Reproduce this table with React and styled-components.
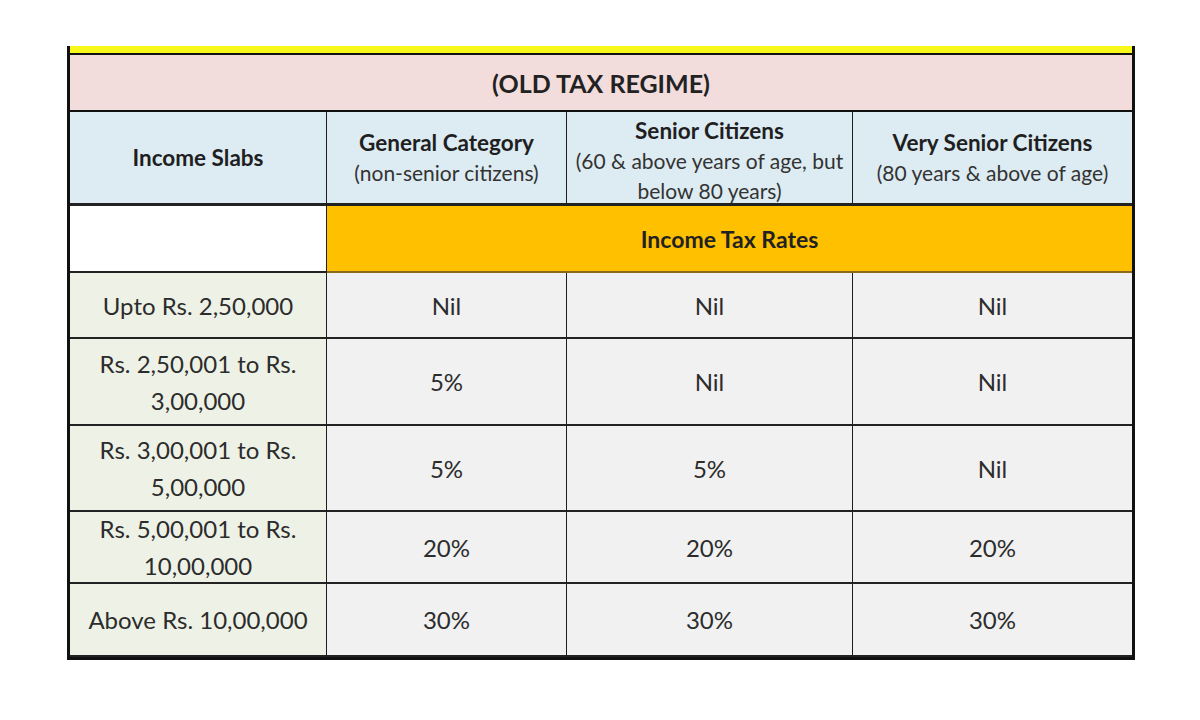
import React from "react";
import styled, { createGlobalStyle } from "styled-components";

const GlobalStyle = createGlobalStyle`
  html, body {
    margin: 0;
    padding: 0;
    background: #ffffff;
    font-family: Lato, "Open Sans", "Liberation Sans", sans-serif;
  }
`;

const Page = styled.div`
  width: 1200px;
  height: 720px;
  padding: 46px 0 0 67px;
  box-sizing: border-box;
  background: #fff;
`;

const Table = styled.div`
  width: 1068px;
  box-sizing: border-box;
  border: 3px solid #111;
  border-top: none;
  display: grid;
  grid-template-columns: 257px 240px 286px 1fr;
  color: #2b2b2b;
`;

const TopStrip = styled.div`
  grid-column: 1 / -1;
  height: 7px;
  background: #f7f71a;
  border-bottom: 2px solid #111;
`;

const Title = styled.div`
  grid-column: 1 / -1;
  height: 55px;
  background: #f2dcdc;
  border-bottom: 2px solid #111;
  display: flex;
  align-items: center;
  justify-content: center;
  font-weight: 700;
  font-size: 25px;
  color: #222;
`;

const Cell = styled.div`
  box-sizing: border-box;
  height: ${(p) => p.$h}px;
  display: flex;
  flex-direction: column;
  align-items: center;
  justify-content: center;
  text-align: center;
  white-space: nowrap;
  background: ${(p) => p.$bg || "#f1f1f1"};
  border-right: ${(p) => (p.$last ? "none" : "1.5px solid #1e1e1e")};
  border-bottom: ${(p) => p.$bb || 2}px solid #222;
  overflow: hidden;
`;

const HeadCell = styled(Cell)`
  background: #ddebf2;
  line-height: 30px;
  color: #222;
  padding-top: ${(p) => p.$pt || 0}px;
`;

const Strong = styled.div`
  font-weight: 700;
  font-size: 22.5px;
  color: #1f1f1f;
`;

const Sub = styled.div`
  font-weight: 400;
  font-size: 21px;
  color: #333;
`;

const RatesBand = styled.div`
  grid-column: 2 / -1;
  height: 67px;
  box-sizing: border-box;
  background: #ffc000;
  border-bottom: 2px solid #8a6a1a;
  display: flex;
  align-items: center;
  justify-content: center;
  font-weight: 700;
  font-size: 23px;
  color: #222;
`;

const BlankCell = styled.div`
  height: 67px;
  box-sizing: border-box;
  background: #fff;
  border-right: 1.5px solid #1e1e1e;
  border-bottom: 2px solid #222;
`;

const DataCell = styled(Cell)`
  font-size: 24px;
  line-height: 37px;
  color: #2c2c2c;
`;

const SlabCell = styled(DataCell)`
  background: #eef2e6;
  padding: 0 12px;
`;

const rows = [
  { slab: ["Upto Rs. 2,50,000"], rates: ["Nil", "Nil", "Nil"], h: 66 },
  { slab: ["Rs. 2,50,001 to Rs.", "3,00,000"], rates: ["5%", "Nil", "Nil"], h: 87 },
  { slab: ["Rs. 3,00,001 to Rs.", "5,00,000"], rates: ["5%", "5%", "Nil"], h: 86 },
  { slab: ["Rs. 5,00,001 to Rs.", "10,00,000"], rates: ["20%", "20%", "20%"], h: 72 },
  { slab: ["Above Rs. 10,00,000"], rates: ["30%", "30%", "30%"], h: 73 },
];

export default function App() {
  return (
    <>
      <GlobalStyle />
      <Page>
        <Table>
          <TopStrip />
          <Title>(OLD TAX REGIME)</Title>

          <HeadCell $h={94} $bb={3}>
            <Strong>Income Slabs</Strong>
          </HeadCell>
          <HeadCell $h={94} $bb={3}>
            <Strong>General Category</Strong>
            <Sub>(non-senior citizens)</Sub>
          </HeadCell>
          <HeadCell $h={94} $bb={3} $pt={6}>
            <Strong>Senior Citizens</Strong>
            <Sub>(60 &amp; above years of age, but</Sub>
            <Sub>below 80 years)</Sub>
          </HeadCell>
          <HeadCell $h={94} $bb={3} $last>
            <Strong>Very Senior Citizens</Strong>
            <Sub>(80 years &amp; above of age)</Sub>
          </HeadCell>

          <BlankCell />
          <RatesBand>Income Tax Rates</RatesBand>

          {rows.map((row, i) => {
            const bb = i === rows.length - 1 ? 0 : 2;
            return (
              <React.Fragment key={row.slab.join(" ")}>
                <SlabCell $h={row.h} $bb={bb}>
                  {row.slab.map((line) => (
                    <div key={line}>{line}</div>
                  ))}
                </SlabCell>
                {row.rates.map((rate, j) => (
                  <DataCell key={j} $h={row.h} $bb={bb} $last={j === 2}>
                    {rate}
                  </DataCell>
                ))}
              </React.Fragment>
            );
          })}
        </Table>
      </Page>
    </>
  );
}
